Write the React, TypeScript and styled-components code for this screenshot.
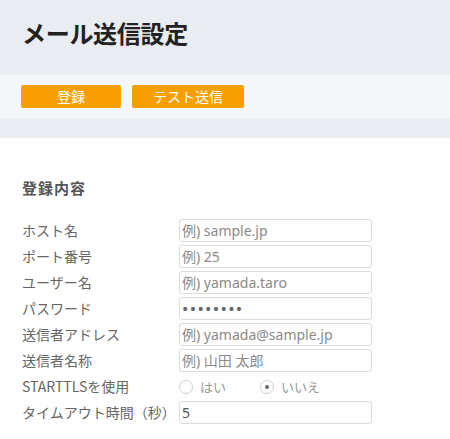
import React from 'react';
import styled, { createGlobalStyle } from 'styled-components';

const GlobalStyle = createGlobalStyle`
	body {
		margin: 0;
		background: #ffffff;
		font-family: 'Noto Sans CJK JP', 'Noto Sans', sans-serif;
	}
`;

const fields = [
	{ label: 'ホスト名', placeholder: '例) sample.jp' },
	{ label: 'ポート番号', placeholder: '例) 25' },
	{ label: 'ユーザー名', placeholder: '例) yamada.taro' },
	{ label: 'パスワード', value: 'password', type: 'password' },
	{ label: '送信者アドレス', placeholder: '例) yamada@sample.jp' },
	{ label: '送信者名称', placeholder: '例) 山田 太郎' },
];

export default function App() {
	return (
		<Page>
			<GlobalStyle />
			<Header>
				<Title>メール送信設定</Title>
			</Header>
			<Toolbar>
				<ActionButton>登録</ActionButton>
				<ActionButton>テスト送信</ActionButton>
			</Toolbar>
			<Band />
			<Content>
				<SectionTitle>登録内容</SectionTitle>
				<Form>
					{fields.map((f) => (
						<React.Fragment key={f.label}>
							<Label>{f.label}</Label>
							<TextInput
								type={f.type ?? 'text'}
								placeholder={f.placeholder}
								defaultValue={f.value}
							/>
						</React.Fragment>
					))}
					<Label>STARTTLSを使用</Label>
					<RadioGroup>
						<RadioOption>
							<RadioCircle checked={false} />
							<RadioText>はい</RadioText>
						</RadioOption>
						<RadioOption>
							<RadioCircle checked={true} />
							<RadioText>いいえ</RadioText>
						</RadioOption>
					</RadioGroup>
					<Label>タイムアウト時間（秒）</Label>
					<TextInput type="text" defaultValue="5" />
				</Form>
			</Content>
		</Page>
	);
}

const Page = styled.div`
	width: 450px;
	min-height: 439px;
	background: #ffffff;
`;
const Header = styled.header`
	height: 75px;
	box-sizing: border-box;
	padding: 18px 22px 0;
	background: #e9ecf1;
`;
const Title = styled.h1`
	margin: 0;
	font-size: 24px;
	line-height: 30px;
	font-weight: 700;
	color: #222222;
	letter-spacing: -0.3px;
`;
const Toolbar = styled.div`
	display: flex;
	flex-direction: row;
	gap: 11px;
	height: 43px;
	box-sizing: border-box;
	padding: 10px 21px;
	background: #f5f6f9;
`;
const ActionButton = styled.button`
	min-width: 100px;
	height: 23px;
	padding: 0 21px;
	border: none;
	border-radius: 2px;
	background: #f79f00;
	color: #ffffff;
	font-family: inherit;
	font-size: 14px;
	line-height: 23px;
`;
const Band = styled.div`
	height: 20px;
	background: #e9ecf1;
`;
const Content = styled.main`
	padding: 40px 22px 0;
`;
const SectionTitle = styled.h2`
	margin: 0 0 21px;
	font-size: 15px;
	line-height: 20px;
	font-weight: 700;
	letter-spacing: 1px;
	color: #555555;
`;
const Form = styled.div`
	display: grid;
	grid-template-columns: 157px 193px;
	grid-auto-rows: 23px;
	row-gap: 3px;
	align-items: center;
`;
const Label = styled.div`
	font-size: 14px;
	line-height: 23px;
	color: #666666;
	white-space: nowrap;
`;
const TextInput = styled.input`
	width: 100%;
	height: 23px;
	box-sizing: border-box;
	padding: 0 2px;
	border: 1px solid #dcdcdc;
	border-radius: 3px;
	background: #ffffff;
	font-family: 'Noto Sans', 'Noto Sans CJK JP', sans-serif;
	font-size: 14px;
	color: #555555;
	outline: none;

	&::placeholder {
		color: #8a8a8a;
	}
	&[type='password'] {
		color: #666666;
		font-size: 17px;
		letter-spacing: 1.3px;
	}
`;
const RadioGroup = styled.div`
	display: flex;
	flex-direction: row;
	align-items: center;
	height: 23px;
`;
const RadioOption = styled.label`
	display: flex;
	align-items: center;
	width: 81px;
`;
const RadioCircle = styled.span<{ checked: boolean }>`
	position: relative;
	width: 12px;
	height: 12px;
	border: 1px solid #cfcfcf;
	border-radius: 50%;
	background: #ffffff;

	&::after {
		content: '';
		display: ${(props) => (props.checked ? 'block' : 'none')};
		position: absolute;
		left: 4px;
		top: 4px;
		width: 4px;
		height: 4px;
		border-radius: 50%;
		background: #666666;
	}
`;
const RadioText = styled.span`
	margin-left: 7px;
	font-size: 13px;
	line-height: 23px;
	color: #999999;
`;
